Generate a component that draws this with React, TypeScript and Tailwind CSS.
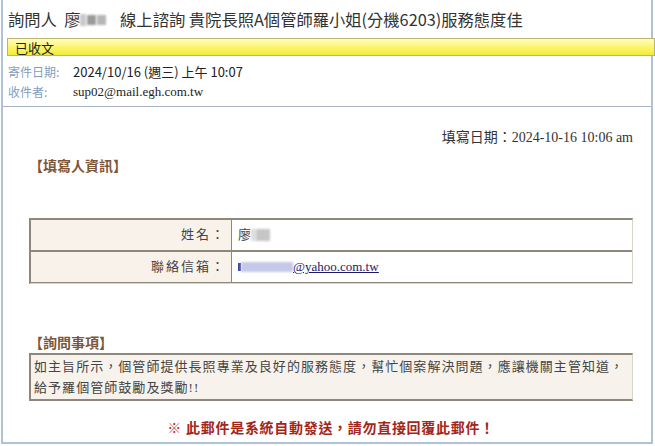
export default function App() {
  const sans = '[font-family:"Noto_Sans_CJK_TC","Noto_Sans",sans-serif]';
  return (
    <div className="w-[655px] h-[446px] bg-white overflow-hidden">
      <div className="ml-[1px] w-[652px] h-[444px] border-l-2 border-r-2 border-b-2 border-[#aec2da] flex flex-col">
        {/* subject */}
        <div className={`h-[38px] pt-[1px] pl-[5px] flex items-center text-[16.3px] text-[#333] whitespace-nowrap ${sans}`}>
          <span>詢問人&nbsp;&nbsp;廖</span>
          <span className="inline-flex items-center gap-[1px] mr-[10px]">
            <span className="w-[6px] h-[12px] bg-[#c9c9c9] blur-[1px]" />
            <span className="w-[9px] h-[10px] bg-[#9a9a9a] blur-[1px]" />
            <span className="w-[9px] h-[10px] bg-[#b5b5b5] blur-[1px]" />
          </span>
          <span>&nbsp;線上諮詢 貴院長照A個管師羅小姐(分機6203)服務態度佳</span>
        </div>

        {/* status bar */}
        <div className="ml-[4px] -mr-[4px] h-[18px] border border-[#bdb66a] bg-gradient-to-b from-[#fffcc4] via-[#fbf56a] to-[#f3ea3c] flex items-center pl-[7px]">
          <span className={`text-[13px] leading-none text-[#222] ${sans}`}>已收文</span>
        </div>

        {/* meta */}
        <div className="pl-[5px] pt-[5px] pb-[4px] border-b border-[#a9b4c4]">
          <div className="h-[21px] flex items-center">
            <span className={`w-[65px] text-[12px] text-[#7f9ec2] ${sans}`}>寄件日期:</span>
            <span className={`text-[13px] text-[#222] ${sans}`}>2024/10/16 (週三) 上午 10:07</span>
          </div>
          <div className="h-[20px] flex items-center">
            <span className={`w-[65px] text-[12px] text-[#7f9ec2] ${sans}`}>收件者:</span>
            <span className="text-[13px] text-[#222] [font-family:'Liberation_Serif',serif]">sup02@mail.egh.com.tw</span>
          </div>
        </div>

        {/* body */}
        <div className={`flex-1 pl-[26px] pr-[18px] text-[#333] [font-family:"Liberation_Serif","Noto_Sans_CJK_TC",serif]`}>
          <div className="mt-[22px] text-right text-[14px] leading-[18px]">填寫日期：2024-10-16 10:06 am</div>

          <div className="mt-[11px] text-[14px] font-bold text-[#7d5638] leading-[18px]">【填寫人資訊】</div>

          <div className="mt-[42px] border-t-2 border-l-2 border-[#8f887a] border-r border-b border-r-[#d8d4cc] border-b-[#d8d4cc]">
            <div className="flex h-[32px] border-b-2 border-[#8f887a]">
              <div className="w-[201px] bg-[#f8f2ea] border-r border-[#8f887a] flex items-center justify-end pr-[5px] text-[13px] tracking-[2px] text-[#444]">姓名：</div>
              <div className="flex-1 flex items-center pl-[6px] text-[13px] text-[#444]">
                <span>廖</span>
                <span className="w-[5px] h-[12px] bg-[#ddd] blur-[1px]" />
                <span className="w-[14px] h-[12px] bg-[#c6c6c6] blur-[1px]" />
              </div>
            </div>
            <div className="flex h-[31px] border-b border-[#8f887a]">
              <div className="w-[201px] bg-[#f8f2ea] border-r border-[#8f887a] flex items-center justify-end pr-[5px] text-[13px] tracking-[2px] text-[#444]">聯絡信箱：</div>
              <div className="flex-1 flex items-center pl-[6px] text-[13px] text-[#1a1a6a]">
                <span className="underline flex items-center">
                  <span className="w-[3px] h-[8px] bg-[#3c4aa0]" />
                  <span className="w-[52px] h-[10px] bg-[#c6c8e8] blur-[1px]" />
                  <span className="underline">@yahoo.com.tw</span>
                </span>
              </div>
            </div>
          </div>

          <div className="mt-[51px] text-[14px] font-bold text-[#7d5638] leading-[18px]">【詢問事項】</div>

          <div className="h-[48px] bg-[#f7f3ec] border-t-2 border-l-2 border-[#8f887a] border-r border-b-2 border-r-[#d8d4cc] border-b-[#8f887a] px-[3px] pt-[1px] text-[13px] leading-[21px] tracking-[1.05px] whitespace-nowrap overflow-hidden text-[#444]">
            如主旨所示，個管師提供長照專業及良好的服務態度，幫忙個案解決問題，應讓機關主管知道，
            <br />
            給予羅個管師鼓勵及獎勵!!
          </div>

          <div className="mt-[17px] text-center text-[14px] font-bold text-[#a3261a] tracking-[0.7px]">
            <span className="text-[#c0301e]">※</span> 此郵件是系統自動發送，請勿直接回覆此郵件！
          </div>
        </div>
      </div>
    </div>
  );
}
